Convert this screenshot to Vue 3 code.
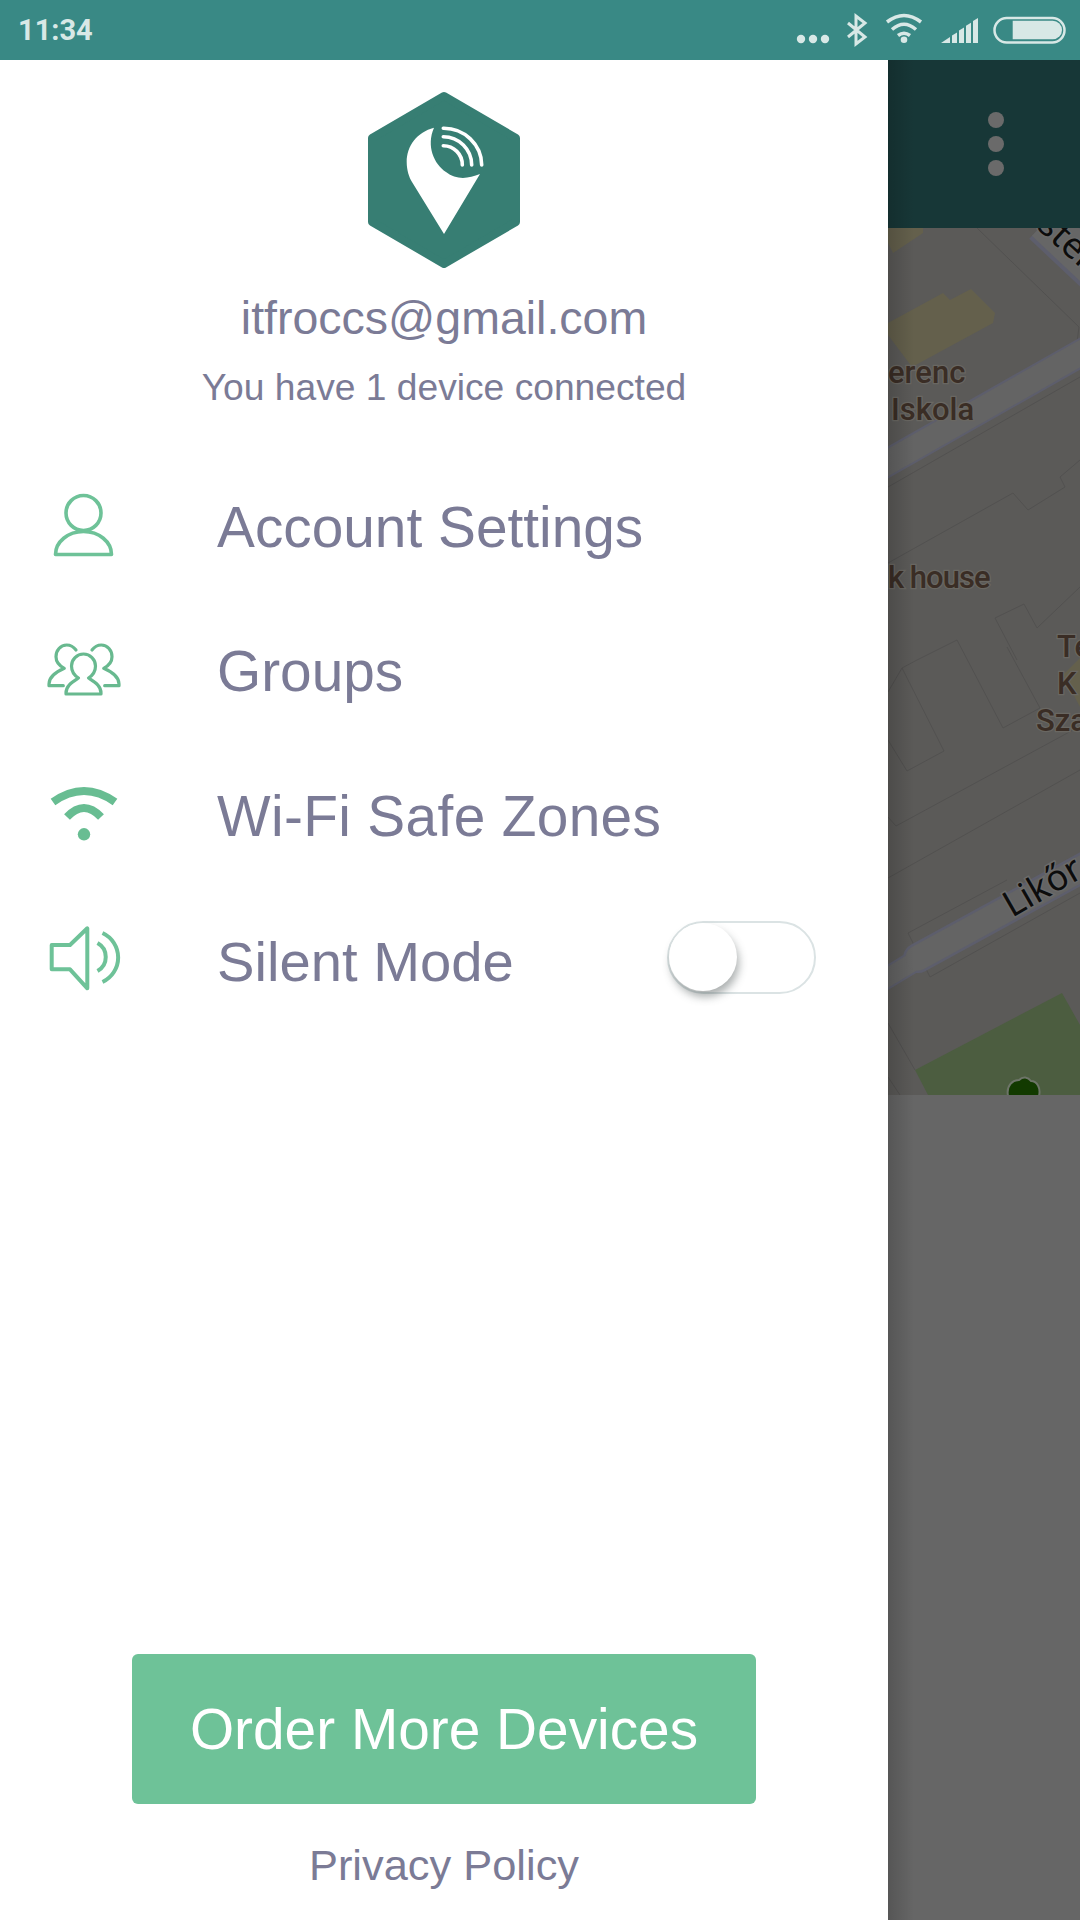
<script setup>
const items = [
  { key: 'account', label: 'Account Settings' },
  { key: 'groups', label: 'Groups' },
  { key: 'wifi', label: 'Wi-Fi Safe Zones' },
  { key: 'silent', label: 'Silent Mode' },
]
</script>

<template>
  <div class="screen">
    <header class="status">
      <span class="time">11:34</span>
      <svg class="status-icons" width="280" height="60" viewBox="0 0 280 60">
        <g fill="#d8e8e6">
          <circle cx="11" cy="39" r="4.2" />
          <circle cx="23" cy="39" r="4.2" />
          <circle cx="35" cy="39" r="4.2" />
          <circle cx="114" cy="39.7" r="3.3" />
          <polygon points="151,43 160,43 160,37" />
          <polygon points="162,43 167,43 167,32.5 162,35.5" />
          <polygon points="169,43 174,43 174,27.5 169,30.5" />
          <polygon points="176,43 181,43 181,22.7 176,25.7" />
          <polygon points="183,43 188,43 188,18 183,21" />
          <path d="M222.7 20.7h40a9.3 9.3 0 0 1 0 18.6h-40z" />
        </g>
        <g fill="none" stroke="#d8e8e6">
          <polyline points="58,23 75,37 66,44 66,16 75,23 58,37" stroke-width="3" />
          <path d="M97 22Q114 9 131 22M102 29.5Q114 19 126 29.5M108 35.5Q114 31 120 35.5" stroke-width="3.5" />
          <rect x="204.5" y="18" width="70" height="24.5" rx="12.2" stroke-width="2.5" />
        </g>
      </svg>
    </header>

    <div class="body">
      <aside class="drawer">
        <svg class="logo" width="160" height="180" viewBox="0 0 160 180">
          <polygon points="80,6 152,48 152,132 80,174 8,132 8,48" fill="#377e73" stroke="#377e73" stroke-width="8" stroke-linejoin="round" />
          <path d="M70 37.7C53 42 42.7 56 42.7 72C42.7 80 45 87 48 92L80 144L116 84C104 89 92 90 82 82C70 74 62 56 70 37.7Z" fill="#fff" />
          <path d="M79.3 38.3A38 37 0 0 1 117.7 75M79.3 46.7A28.4 28.4 0 0 1 107.7 75M79.3 55.7A19 19 0 0 1 98.3 75" fill="none" stroke="#fff" stroke-width="3.6" stroke-linecap="round" />
        </svg>
        <div class="email">itfroccs@gmail.com</div>
        <div class="sub">You have 1 device connected</div>

        <nav class="menu">
          <div v-for="item in items" :key="item.key" class="row">
            <svg class="icon" width="80" height="80" viewBox="0 0 80 80">
              <g v-if="item.key === 'account'" fill="none" stroke="#6ec298" stroke-width="3.6">
                <circle cx="40.5" cy="26" r="17.5" />
                <path d="M12.5 67.5a28 23 0 0 1 56 0z" stroke-linejoin="round" />
              </g>
              <g v-else-if="item.key === 'groups'" fill="none" stroke="#68b98f" stroke-width="3.2" stroke-linecap="round" stroke-linejoin="round">
                <path d="M23 61C23 54 28 51 35.5 46C31.5 43.5 28.5 40 28.5 34A12 12 0 0 1 52.5 34C52.5 40 49.5 43.5 45.5 46C53 51 58 54 58 61V62H23Z" />
                <path d="M33 18C30 14 27 13 23.7 13C17.5 13 13 18.5 13 24.7C13 29.5 16 33.5 21.3 36.3C14 39.5 6 44 6 52V53.7H20.3" />
                <path d="M49 18C52 14 55 13 58.3 13C64.5 13 69 18.5 69 24.7C69 29.5 66 33.5 60.7 36.3C68 39.5 76 44 76 52V53.7H61.7" />
              </g>
              <g v-else-if="item.key === 'wifi'" fill="none" stroke="#68bd92" stroke-width="8">
                <path d="M10 26Q41 4 72 26M24 41Q41 23 58 41" />
                <circle cx="41" cy="58.3" r="6.2" fill="#68bd92" stroke="none" />
              </g>
              <g v-else fill="none" stroke="#6ec298" stroke-width="4">
                <path d="M8.7 24H27L44.3 7.3V67.3L27 48.3H8.7Z" stroke-linejoin="round" />
                <path d="M53 22A16 16 0 0 1 53 50M58 12A27 27 0 0 1 58 61" transform="translate(1.5 0)" />
              </g>
            </svg>
            <span class="label" :class="'label-' + item.key">{{ item.label }}</span>
            <div v-if="item.key === 'silent'" class="toggle">
              <span class="knob"></span>
            </div>
          </div>
        </nav>

        <button class="order">Order More Devices</button>
        <a class="privacy">Privacy Policy</a>
      </aside>

      <section class="backdrop">
        <div class="topbar">
          <span class="dot"></span>
          <span class="dot"></span>
          <span class="dot"></span>
        </div>
        <svg class="map" width="192" height="867" viewBox="888 228 192 867">
          <rect x="888" y="228" width="192" height="867" fill="#5b5a58" />
          <polygon points="888,228 923,228 923,233 893,253 888,243" fill="#64604c" />
          <polygon points="888,323 943,293 950,300 971,289 995,313 993,323 912,367 888,335" fill="#64604c" />
          <polygon points="1080,658 1063,675 1080,707" fill="#64604c" />
          <g fill="none" stroke="#525150" stroke-width="1">
            <path d="M977 228L1079 327L1077 342" />
            <path d="M888 487L1080 377" />
            <path d="M888 563L1013 493L1028 510L1065 487L1060 477L1080 460" />
            <path d="M1080 587L1037 628L1024 604L995 618L1017 660" />
            <path d="M917 660L957 640L1003 728L1040 708L1007 647" />
            <path d="M888 692L902 668L944 751L907 771L888 740" />
            <path d="M902 668L917 660" />
            <path d="M888 817L896 826L1073 730" />
            <path d="M888 878L1080 770" />
            <path d="M930 977L908 933L1007 880" />
            <path d="M930 977L1080 893" />
            <path d="M888 1023L915 1070" />
            <path d="M888 1077L900 1095" />
          </g>
          <path d="M1045 222L1115 288" stroke="#5d5e6c" stroke-width="46" fill="none" />
          <path d="M1045 222L1115 288" stroke="#666666" stroke-width="38" fill="none" />
          <path d="M880 467L1088 349" stroke="#5d5e6c" stroke-width="28" fill="none" />
          <path d="M880 467L1088 349" stroke="#646464" stroke-width="24" fill="none" />
          <path d="M880 982L918 959" stroke="#5d5e6c" stroke-width="22" fill="none" />
          <path d="M918 958L1090 864" stroke="#5d5e6c" stroke-width="30" stroke-linecap="round" fill="none" />
          <path d="M880 982L918 959" stroke="#646464" stroke-width="18" fill="none" />
          <path d="M918 958L1090 864" stroke="#646464" stroke-width="25" stroke-linecap="round" fill="none" />
          <polygon points="915,1070 1062,993 1080,1025 1080,1095 928,1095" fill="#4c5d40" />
          <path d="M1008 1096C1006 1085 1013 1080 1019 1080C1023 1076 1028 1077 1031 1081C1037 1081 1041 1088 1039 1096Z" fill="#123a00" stroke="#6d7468" stroke-width="2" />
          <g class="map-text">
            <text x="888" y="383">erenc</text>
            <text x="891" y="420">Iskola</text>
            <text x="888" y="588" class="narrow">k house</text>
            <text x="1057" y="657">Te</text>
            <text x="1057" y="694">K</text>
            <text x="1036" y="731">Sza</text>
          </g>
          <text class="road-text" x="1012" y="918" transform="rotate(-30 1012 918)">Likőr</text>
          <text class="road-text" x="1036" y="228" transform="rotate(42 1036 228)">ster</text>
        </svg>
        <div class="rest"></div>
      </section>
    </div>
  </div>
</template>

<style>
html, body { margin: 0; padding: 0; background: #fff; }
</style>

<style scoped>
.screen {
  width: 1080px;
  height: 1920px;
  display: flex;
  flex-direction: column;
  overflow: hidden;
  font-family: "Liberation Sans", Arial, sans-serif;
}
.status {
  height: 60px;
  flex: none;
  background: #398985;
  display: flex;
  align-items: center;
  justify-content: space-between;
  padding: 0 10px 0 18px;
}
.time {
  font-family: Roboto, sans-serif;
  font-weight: 700;
  font-size: 29px;
  color: #d8e8e6;
}
.status-icons { display: block; }
.body {
  flex: 1;
  display: flex;
  min-height: 0;
}
.drawer {
  width: 888px;
  flex: none;
  background: #fff;
  display: flex;
  flex-direction: column;
  align-items: center;
}
.logo {
  display: block;
  margin-top: 30px;
}
.email {
  margin-top: 21px;
  font-size: 46.5px;
  line-height: 54px;
  color: #7b7b96;
}
.sub {
  margin-top: 21px;
  font-size: 37.2px;
  line-height: 42px;
  color: #7b7b96;
}
.menu {
  align-self: stretch;
  margin-top: 47px;
  display: flex;
  flex-direction: column;
}
.row {
  height: 144.6px;
  display: flex;
  align-items: center;
  padding: 0 72px 0 43px;
}
.icon {
  display: block;
  flex: none;
  margin-right: 94px;
}
.label {
  font-size: 56.8px;
  color: #7b7b96;
}
.label-wifi { letter-spacing: 0.35px; }
.label-silent { font-size: 56.2px; }
.toggle {
  position: relative;
  margin-left: auto;
  margin-bottom: 7px;
  width: 149px;
  height: 73px;
  box-sizing: border-box;
  border: 2.5px solid #dbe3e4;
  border-radius: 37px;
  background: #fff;
}
.knob {
  position: absolute;
  left: 0;
  top: 0;
  width: 68px;
  height: 68px;
  border-radius: 50%;
  background: #fff;
  box-shadow: 2px 6px 8px rgba(60, 70, 70, 0.42);
}
.order {
  margin-top: auto;
  width: 624px;
  height: 150px;
  flex: none;
  border: none;
  border-radius: 6px;
  background: #6ec298;
  color: #fff;
  font-family: inherit;
  font-size: 56.8px;
  padding: 0;
}
.privacy {
  margin-top: 36px;
  margin-bottom: 30px;
  font-size: 43.4px;
  line-height: 50px;
  color: #7b7b96;
}
.backdrop {
  position: relative;
  flex: 1;
  display: flex;
  flex-direction: column;
  background: #666;
}
.backdrop::after {
  content: "";
  position: absolute;
  left: 0;
  top: 0;
  bottom: 0;
  width: 26px;
  background: linear-gradient(to right, rgba(0, 0, 0, 0.16), rgba(0, 0, 0, 0));
}
.topbar {
  height: 168px;
  flex: none;
  background: #173737;
  display: flex;
  flex-direction: column;
  align-items: center;
  justify-content: center;
  gap: 8px;
  padding-left: 24px;
}
.dot {
  width: 16px;
  height: 16px;
  border-radius: 50%;
  background: #6a6a6a;
}
.map { display: block; flex: none; }
.rest { flex: 1; background: #666; }
.map-text text {
  font-family: Roboto, sans-serif;
  font-weight: 500;
  font-size: 31px;
  fill: #3a2d25;
  stroke: #696762;
  stroke-width: 2.5px;
  paint-order: stroke;
}
.map-text .narrow { letter-spacing: -1px; }
.road-text {
  font-family: "Noto Sans", sans-serif;
  font-size: 36px;
  fill: #0c0c0c;
  stroke: #6a6a6a;
  stroke-width: 3px;
  paint-order: stroke;
}
</style>
